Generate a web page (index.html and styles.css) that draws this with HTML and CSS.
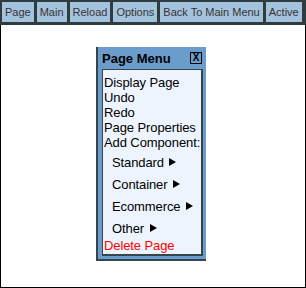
FILE: index.html
```html
<!DOCTYPE html>
<html>
<head>
<meta charset="utf-8">
<link rel="stylesheet" href="styles.css">
</head>
<body>
<div class="page">
  <div class="toolbar">
    <span class="btn">Page</span>
    <span class="btn">Main</span>
    <span class="btn">Reload</span>
    <span class="btn">Options</span>
    <span class="btn">Back To Main Menu</span>
    <span class="btn">Active</span>
  </div>
  <div class="canvas">
    <div class="menu">
      <div class="menu-title">
        <span class="title-text">Page Menu</span>
        <span class="close">X</span>
      </div>
      <div class="menu-body">
        <div class="item">Display Page</div>
        <div class="item">Undo</div>
        <div class="item">Redo</div>
        <div class="item">Page Properties</div>
        <div class="item">Add Component:</div>
        <div class="item sub">Standard <span class="arrow"></span></div>
        <div class="item sub">Container <span class="arrow"></span></div>
        <div class="item sub">Ecommerce <span class="arrow"></span></div>
        <div class="item sub">Other <span class="arrow"></span></div>
        <div class="item danger">Delete Page</div>
      </div>
    </div>
  </div>
</div>
</body>
</html>
```
FILE: styles.css
```css
html, body {
  margin: 0;
  padding: 0;
  background: #fff;
}
.page {
  width: 306px;
  height: 288px;
  box-sizing: border-box;
  border: 1px solid #000;
  border-top: none;
  display: flex;
  flex-direction: column;
  font-family: "Liberation Sans", Arial, sans-serif;
}
.toolbar {
  background: #2f3c40;
  height: 25px;
  box-sizing: border-box;
  padding: 2px 0 0 2px;
  display: flex;
  gap: 3px;
  margin: 0 -1px;
}
.btn {
  flex-shrink: 0;
  white-space: nowrap;
  background: #a6c3de;
  color: #333;
  font-size: 11px;
  height: 20px;
  line-height: 21px;
  padding: 0 3px;
}
.canvas {
  flex: 1;
  padding-top: 22px;
}
.menu {
  margin-left: 95px;
  width: 110px;
  box-sizing: border-box;
  background: #6a9ccc;
  border-left: 2px solid #34464c;
  border-bottom: 2px solid #34464c;
  padding: 0 3px 3px 4px;
}
.menu-title {
  display: flex;
  justify-content: space-between;
  align-items: center;
  height: 22px;
}
.title-text {
  font-weight: bold;
  font-size: 13px;
  color: #000;
}
.close {
  width: 10px;
  height: 10px;
  border: 1px solid #000;
  font-size: 10px;
  font-weight: bold;
  line-height: 10px;
  text-align: center;
  margin-right: 1px;
}
.menu-body {
  background: #eef4fd;
  border-top: 1px solid #34464c;
  border-left: 1px solid #34464c;
  border-right: 2px solid #34464c;
  border-bottom: 2px solid #34464c;
  padding: 5px 0 1px 1px;
}
.item {
  font-size: 13px;
  line-height: 15px;
  color: #000;
  white-space: nowrap;
  letter-spacing: -0.1px;
}
.item.sub {
  padding: 5px 0 2px 8px;
}
.item.danger {
  color: #f00;
}
.arrow {
  display: inline-block;
  width: 0;
  height: 0;
  border-left: 7px solid #000;
  border-top: 4px solid transparent;
  border-bottom: 4px solid transparent;
  margin-left: 2px;
  vertical-align: 1px;
}
```
